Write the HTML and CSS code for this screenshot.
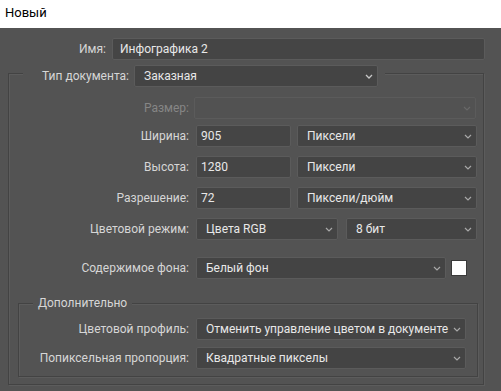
FILE: index.html
```html
<!DOCTYPE html>
<html lang="ru">
<head>
<meta charset="utf-8">
<link rel="stylesheet" href="styles.css">
</head>
<body>
<div class="titlebar">Новый</div>
<div class="dialog">
  <div class="name-row">
    <span class="name-label">Имя:</span>
    <div class="field name-field">Инфографика 2</div>
  </div>

  <div class="group outer">
    <div class="group-head outer-head">
      <span class="type-label">Тип документа:</span>
      <div class="select type-select"><span>Заказная</span><svg class="chev" width="8" height="5" viewBox="0 0 8 5"><polyline points="1,1 4,4 7,1" fill="none" stroke="#c8c8c8" stroke-width="1.3"/></svg></div>
    </div>

    <div class="row first">
      <span class="label disabled">Размер:</span>
      <div class="select disabled-select size-select"><span></span><svg class="chev" width="8" height="5" viewBox="0 0 8 5"><polyline points="1,1 4,4 7,1" fill="none" stroke="#686868" stroke-width="1.2"/></svg></div>
    </div>

    <div class="row">
      <span class="label">Ширина:</span>
      <div class="field num">905</div>
      <div class="select unit"><span>Пиксели</span><svg class="chev" width="8" height="5" viewBox="0 0 8 5"><polyline points="1,1 4,4 7,1" fill="none" stroke="#a8a8a8" stroke-width="1.2"/></svg></div>
    </div>

    <div class="row">
      <span class="label">Высота:</span>
      <div class="field num">1280</div>
      <div class="select unit"><span>Пиксели</span><svg class="chev" width="8" height="5" viewBox="0 0 8 5"><polyline points="1,1 4,4 7,1" fill="none" stroke="#a8a8a8" stroke-width="1.2"/></svg></div>
    </div>

    <div class="row">
      <span class="label">Разрешение:</span>
      <div class="field num">72</div>
      <div class="select unit"><span>Пиксели/дюйм</span><svg class="chev" width="8" height="5" viewBox="0 0 8 5"><polyline points="1,1 4,4 7,1" fill="none" stroke="#a8a8a8" stroke-width="1.2"/></svg></div>
    </div>

    <div class="row">
      <span class="label">Цветовой режим:</span>
      <div class="select mode"><span>Цвета RGB</span><svg class="chev" width="8" height="5" viewBox="0 0 8 5"><polyline points="1,1 4,4 7,1" fill="none" stroke="#a8a8a8" stroke-width="1.2"/></svg></div>
      <div class="select bits"><span>8 бит</span><svg class="chev" width="8" height="5" viewBox="0 0 8 5"><polyline points="1,1 4,4 7,1" fill="none" stroke="#a8a8a8" stroke-width="1.2"/></svg></div>
    </div>

    <div class="row bg-row">
      <span class="label">Содержимое фона:</span>
      <div class="select bg"><span>Белый фон</span><svg class="chev" width="8" height="5" viewBox="0 0 8 5"><polyline points="1,1 4,4 7,1" fill="none" stroke="#a8a8a8" stroke-width="1.2"/></svg></div>
      <div class="swatch"></div>
    </div>

    <div class="group inner">
      <div class="group-head inner-head">Дополнительно</div>
      <div class="row inner-first">
        <span class="label inner-label">Цветовой профиль:</span>
        <div class="select wide"><span>Отменить управление цветом в документе</span><svg class="chev" width="8" height="5" viewBox="0 0 8 5"><polyline points="1,1 4,4 7,1" fill="none" stroke="#a8a8a8" stroke-width="1.2"/></svg></div>
      </div>
      <div class="row inner-second">
        <span class="label inner-label">Попиксельная пропорция:</span>
        <div class="select wide"><span>Квадратные пикселы</span><svg class="chev" width="8" height="5" viewBox="0 0 8 5"><polyline points="1,1 4,4 7,1" fill="none" stroke="#a8a8a8" stroke-width="1.2"/></svg></div>
      </div>
    </div>
  </div>
</div>
</body>
</html>
```

FILE: styles.css
```css
* { box-sizing: border-box; }

html, body {
  margin: 0;
  padding: 0;
  background: #535353;
  font-family: Roboto, "Noto Sans", sans-serif;
  font-size: 12px;
  color: #d6d6d6;
  width: 501px;
  height: 391px;
  overflow: hidden;
}

.titlebar {
  height: 28px;
  background: #ffffff;
  color: #000000;
  padding-left: 5px;
  line-height: 26px;
  font-size: 13px;
}

.dialog {
  padding-top: 10px;
}

.name-row {
  display: flex;
  align-items: center;
  height: 22px;
}

.name-label {
  width: 106px;
  text-align: right;
  margin-right: 6px;
}

.field,
.select {
  height: 22px;
  background: #454545;
  border: 1px solid #5b5b5b;
  border-radius: 2px;
  color: #e8e8e8;
  display: flex;
  align-items: center;
  white-space: nowrap;
  overflow: hidden;
}

.field {
  padding-left: 4px;
}

.name-field {
  width: 373px;
  padding-left: 7px;
}

.select {
  padding-left: 9px;
  padding-right: 4px;
  background: #444444;
}

.select span {
  flex: 1;
  overflow: hidden;
}

.chev {
  flex: none;
}

.group {
  border: 1px solid #434343;
  box-shadow: inset 1px 1px 0 #5c5c5c, 1px 1px 0 #5c5c5c;
}

.outer {
  margin: 13px 0 0 8px;
  width: 476px;
  padding-bottom: 7px;
}

.group-head {
  background: #535353;
  width: fit-content;
}

.outer-head {
  display: flex;
  align-items: center;
  margin: -9px 0 0 14px;
  padding-right: 7px;
  height: 22px;
}

.type-label {
  width: 106px;
  text-align: right;
  margin-right: 5px;
}

.type-select {
  width: 244px;
}

.row {
  display: flex;
  align-items: center;
  height: 22px;
  margin-top: 9px;
}

.row.first {
  margin-top: 10px;
}

.row.first + .row {
  margin-top: 6px;
}

.label {
  width: 180px;
  text-align: right;
  margin-right: 7px;
  flex: none;
}

.label.disabled {
  color: #868686;
  margin-right: 5px;
}

.disabled-select {
  background: #525252;
  border-color: #5b5b5b;
}

.size-select {
  width: 282px;
}

.num {
  width: 95px;
  margin-right: 6px;
}

.unit {
  width: 180px;
}

.mode {
  width: 142px;
  margin-right: 8px;
}

.bits {
  width: 131px;
}

.bg-row {
  margin-top: 17px;
}

.bg {
  width: 250px;
  margin-right: 5px;
}

.swatch {
  width: 16px;
  height: 16px;
  background: #ffffff;
  border: 1px solid #3a3a3a;
}

.inner {
  margin: 24px 5px 0 9px;
  width: 460px;
  padding-bottom: 7px;
}

.inner-head {
  display: block;
  margin: -9px 0 0 14px;
  padding: 0 5px;
  height: 17px;
  line-height: 17px;
}

.inner-first {
  margin-top: 6px;
}

.inner-second {
  margin-top: 7px;
}

.inner-label {
  width: 170px;
}

.wide {
  width: 270px;
}
```
